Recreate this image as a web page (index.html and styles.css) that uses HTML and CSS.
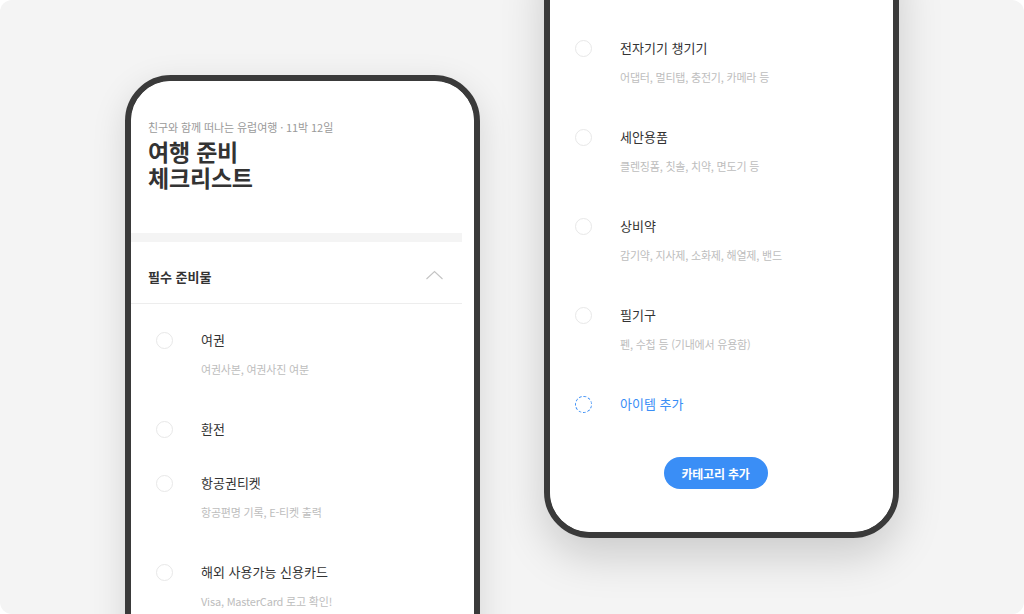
FILE: index.html
```html
<!DOCTYPE html>
<html lang="ko">
<head>
<meta charset="utf-8">
<title>여행 준비 체크리스트</title>
<link rel="stylesheet" href="styles.css">
</head>
<body>
<div class="stage">
  <div class="phone phone-left">
    <div class="screen">
      <div class="content">
        <header class="head">
          <p class="trip">친구와 함께 떠나는 유럽여행 · 11박 12일</p>
          <h1 class="title"><span class="title-line">여행 준비</span><span class="title-line">체크리스트</span></h1>
        </header>
        <div class="band"></div>
        <div class="section-head">
          <span class="section-name">필수 준비물</span>
          <svg class="chevron" width="17" height="10" viewBox="0 0 17 10"><path d="M0.5 9 L8.5 1.5 L16.5 9" fill="none" stroke="#c4c4c4" stroke-width="1.1"/></svg>
        </div>
        <ul class="list list-top">
          <li class="item"><span class="check"></span><span class="name">여권</span><span class="desc">여권사본, 여권사진 여분</span></li>
          <li class="item"><span class="check"></span><span class="name">환전</span></li>
          <li class="item"><span class="check"></span><span class="name">항공권티켓</span><span class="desc">항공편명 기록, E-티켓 출력</span></li>
          <li class="item"><span class="check"></span><span class="name">해외 사용가능 신용카드</span><span class="desc">Visa, MasterCard 로고 확인!</span></li>
        </ul>
      </div>
    </div>
  </div>

  <div class="phone phone-right">
    <div class="screen screen-end">
      <div class="content content-end">
        <ul class="list">
          <li class="item"><span class="check"></span><span class="name">전자기기 챙기기</span><span class="desc">어댑터, 멀티탭, 충전기, 카메라 등</span></li>
          <li class="item"><span class="check"></span><span class="name">세안용품</span><span class="desc">클렌징폼, 칫솔, 치약, 면도기 등</span></li>
          <li class="item"><span class="check"></span><span class="name">상비약</span><span class="desc">감기약, 지사제, 소화제, 해열제, 밴드</span></li>
          <li class="item"><span class="check"></span><span class="name">필기구</span><span class="desc">펜, 수첩 등 (기내에서 유용함)</span></li>
          <li class="item item-add"><span class="check check-add"></span><span class="name name-add">아이템 추가</span></li>
        </ul>
        <button class="add-cat" type="button">카테고리 추가</button>
      </div>
    </div>
  </div>
</div>
</body>
</html>
```

FILE: styles.css
```css
* { box-sizing: border-box; }

html, body {
  margin: 0;
  padding: 0;
  background: #ffffff;
}

body {
  font-family: "Noto Sans CJK KR", "Noto Sans", sans-serif;
  color: #333333;
}

.stage {
  position: relative;
  width: 1024px;
  height: 614px;
  background: #f4f4f4;
  border-radius: 12px;
  overflow: hidden;
}

.phone {
  position: absolute;
  width: 355px;
  border: 6px solid #3a3a3a;
  border-radius: 46px;
  background: #ffffff;
  overflow: hidden;
}

.phone-left {
  left: 125px;
  top: 75px;
  height: 620px;
  box-shadow: 0 10px 34px rgba(0, 0, 0, 0.13);
}

.phone-right {
  left: 544px;
  top: -70px;
  height: 608px;
  box-shadow: 0 18px 44px rgba(0, 0, 0, 0.17);
}

.screen {
  height: 100%;
  border-radius: 40px;
  overflow: hidden;
  background: #ffffff;
}

.screen-end {
  display: flex;
  flex-direction: column;
  justify-content: flex-end;
}

.content {
  margin-right: 12px;
}

.content-end {
  display: flex;
  flex-direction: column;
  padding-bottom: 43px;
}

.head {
  padding: 38px 17px 0 17px;
}

.trip {
  margin: 0;
  font-size: 11px;
  line-height: 16px;
  letter-spacing: -0.1px;
  color: #9a9a9a;
}

.title {
  margin: 3px 0 0 0;
  font-size: 23px;
  line-height: 26px;
  font-weight: 700;
  letter-spacing: -0.2px;
  color: #333333;
}

.title-line {
  display: block;
}

.band {
  margin-top: 43px;
  height: 9px;
  background: #f4f4f4;
}

.section-head {
  display: flex;
  align-items: center;
  justify-content: space-between;
  padding: 25px 19px 16px 17px;
  border-bottom: 1px solid #ededed;
}

.section-name {
  font-size: 13px;
  line-height: 20px;
  font-weight: 700;
  color: #333333;
}

.chevron {
  display: block;
  margin-top: -4px;
}

.list {
  list-style: none;
  margin: 0;
  padding: 0;
}

.list-top {
  padding-top: 9px;
}

.item {
  display: grid;
  grid-template-columns: 17px 1fr;
  column-gap: 28px;
  padding: 17px 0 17px 25px;
}

.check {
  grid-column: 1;
  grid-row: 1;
  align-self: center;
  width: 17px;
  height: 17px;
  border-radius: 50%;
  border: 1.5px solid #e8e8e8;
}

.check-add {
  border: 1.5px dashed #3a8ef6;
}

.name {
  grid-column: 2;
  grid-row: 1;
  font-size: 13px;
  line-height: 20px;
  letter-spacing: 0;
  color: #333333;
}

.name-add {
  color: #3a8ef6;
}

.desc {
  grid-column: 2;
  grid-row: 2;
  margin-top: 11px;
  margin-bottom: 8px;
  font-size: 11px;
  line-height: 16px;
  letter-spacing: -0.2px;
  color: #bdbdbd;
}

.add-cat {
  align-self: center;
  margin-top: 26px;
  width: 104px;
  height: 32px;
  border: none;
  border-radius: 16px;
  background: #3a8ef6;
  color: #ffffff;
  font-family: "Noto Sans CJK KR", "Noto Sans", sans-serif;
  font-size: 12px;
  font-weight: 700;
  letter-spacing: -0.2px;
  padding: 0;
}
```
